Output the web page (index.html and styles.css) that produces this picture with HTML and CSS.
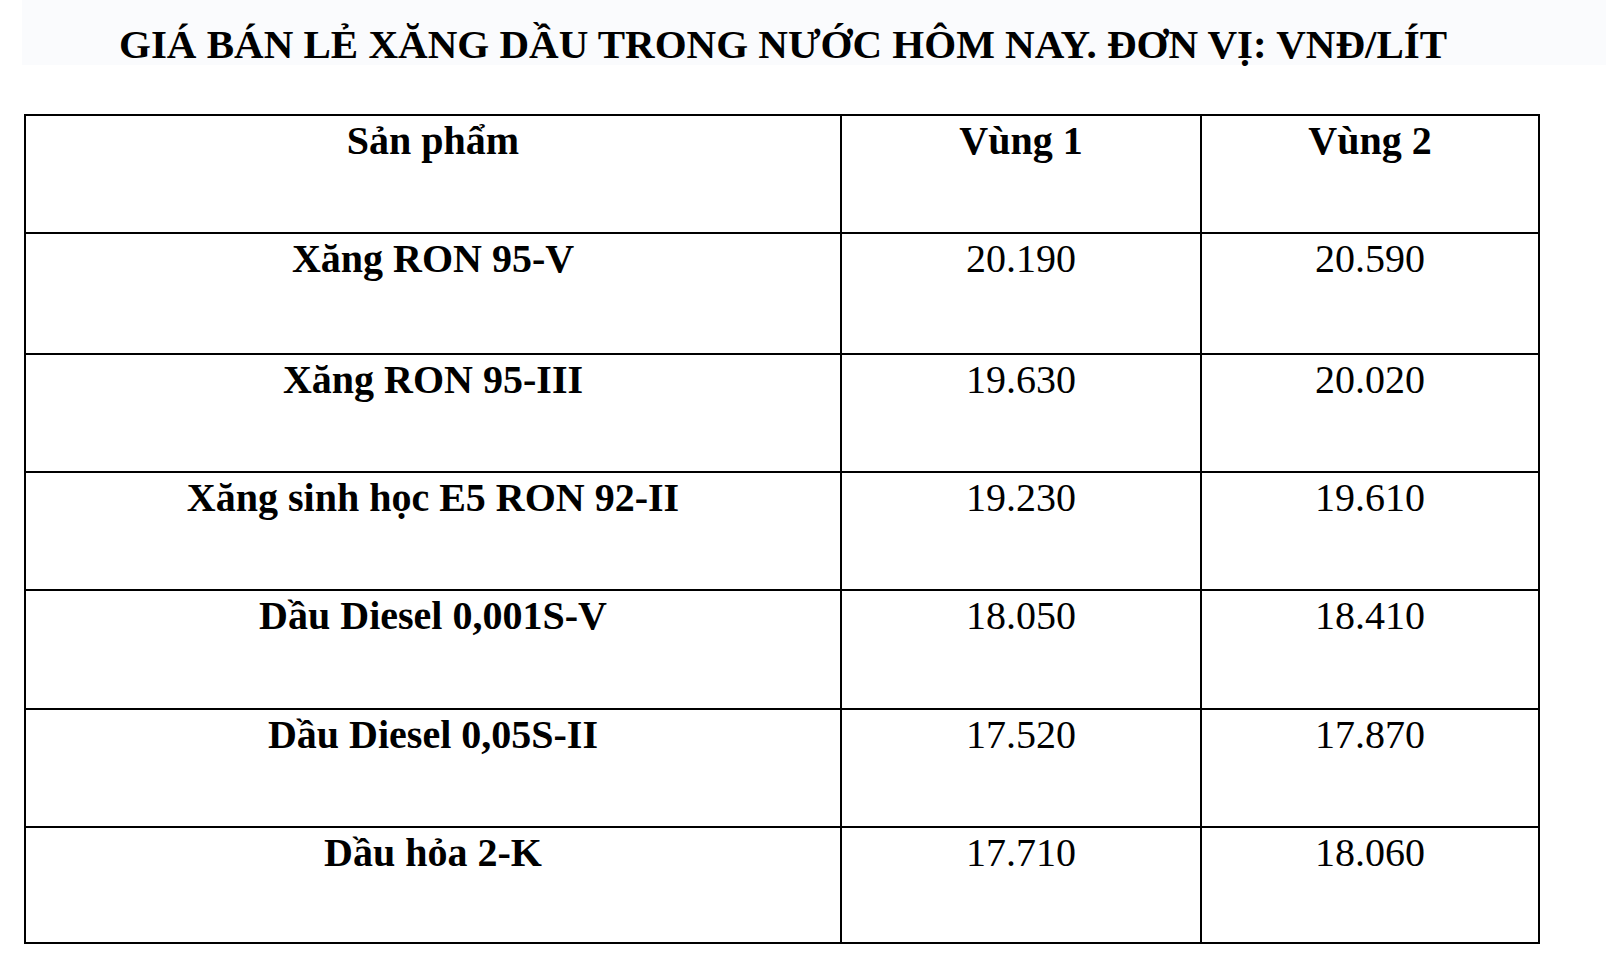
FILE: index.html
```html
<!DOCTYPE html>
<html lang="vi">
<head>
<meta charset="utf-8">
<title>Giá bán lẻ xăng dầu</title>
<link rel="stylesheet" href="styles.css">
</head>
<body>
<div class="title-band">
  <h1 class="title">GIÁ BÁN LẺ XĂNG DẦU TRONG NƯỚC HÔM NAY. ĐƠN VỊ: VNĐ/LÍT</h1>
</div>
<table class="price-table">
  <thead>
    <tr class="row-head">
      <th class="col-product">Sản phẩm</th>
      <th class="col-zone1">Vùng 1</th>
      <th class="col-zone2">Vùng 2</th>
    </tr>
  </thead>
  <tbody>
    <tr class="row-a"><th>Xăng RON 95-V</th><td>20.190</td><td>20.590</td></tr>
    <tr class="row-b"><th>Xăng RON 95-III</th><td>19.630</td><td>20.020</td></tr>
    <tr class="row-c"><th>Xăng sinh học E5 RON 92-II</th><td>19.230</td><td>19.610</td></tr>
    <tr class="row-d"><th>Dầu Diesel 0,001S-V</th><td>18.050</td><td>18.410</td></tr>
    <tr class="row-e"><th>Dầu Diesel 0,05S-II</th><td>17.520</td><td>17.870</td></tr>
    <tr class="row-f"><th>Dầu hỏa 2-K</th><td>17.710</td><td>18.060</td></tr>
  </tbody>
</table>
</body>
</html>
```

FILE: styles.css
```css
html, body {
  margin: 0;
  padding: 0;
  background: #ffffff;
}

body {
  font-family: "Liberation Serif", "Times New Roman", serif;
  color: #000000;
}

.title-band {
  margin-left: 22px;
  height: 65px;
  background: #fafbfd;
  padding-left: 97px;
  box-sizing: border-box;
}

.title {
  margin: 0;
  padding-top: 21px;
  font-size: 41px;
  line-height: 46px;
  font-weight: bold;
  white-space: nowrap;
}

.price-table {
  margin-top: 49px;
  margin-left: 24px;
  border-collapse: separate;
  border-spacing: 0;
  border-top: 2px solid #000;
  border-left: 2px solid #000;
  table-layout: fixed;
}

.price-table th,
.price-table td {
  box-sizing: border-box;
  border-right: 2px solid #000;
  border-bottom: 2px solid #000;
  padding: 2px 0 0;
  text-align: center;
  vertical-align: top;
  font-size: 40px;
  line-height: 46px;
  white-space: nowrap;
}

.price-table th {
  font-weight: bold;
}

.price-table td {
  font-weight: normal;
}

.col-product { width: 816px; }
.col-zone1 { width: 360px; }
.col-zone2 { width: 338px; }

.row-head th { height: 118px; }
.row-a th, .row-a td { height: 121px; }
.row-b th, .row-b td { height: 118px; }
.row-c th, .row-c td { height: 118px; }
.row-d th, .row-d td { height: 119px; }
.row-e th, .row-e td { height: 118px; }
.row-f th, .row-f td { height: 116px; }
```
